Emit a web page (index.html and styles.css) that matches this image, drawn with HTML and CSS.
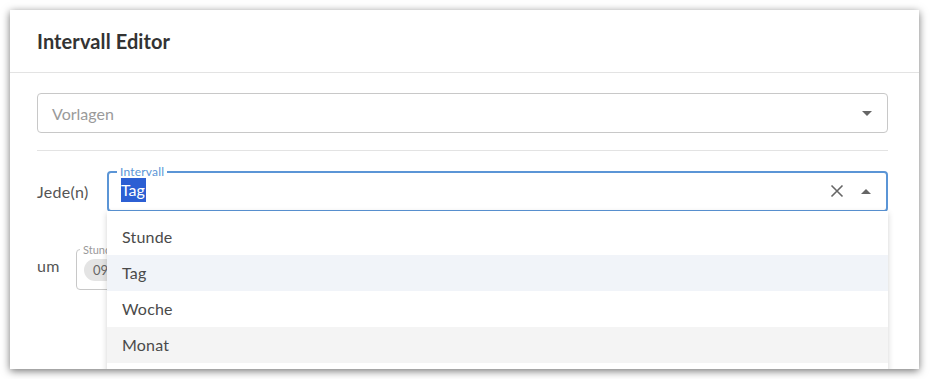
FILE: index.html
```html
<!DOCTYPE html>
<html lang="de">
<head>
<meta charset="utf-8">
<title>Intervall Editor</title>
<link rel="stylesheet" href="styles.css">
</head>
<body>
<div class="dialog">
  <div class="dialog-header">Intervall Editor</div>
  <div class="dialog-body">
    <div class="select">
      <span class="placeholder">Vorlagen</span>
      <span class="caret down"></span>
    </div>
    <div class="divider"></div>
    <div class="row">
      <div class="label">Jede(n)</div>
      <fieldset class="field focused">
        <legend>Intervall</legend>
        <span class="value"><span class="sel">Tag</span></span>
        <svg class="clear" width="14" height="14" viewBox="0 0 14 14"><path d="M1.5 1.5 L12.5 12.5 M12.5 1.5 L1.5 12.5" stroke="#666" stroke-width="1.6" fill="none"/></svg>
        <span class="caret up"></span>
      </fieldset>
    </div>
    <div class="row row-um">
      <div class="label label-um">um</div>
      <fieldset class="field small">
        <legend>Stunde</legend>
        <span class="chip">09</span>
      </fieldset>
      <div class="ghost"></div>
    </div>
    <ul class="menu">
      <li>Stunde</li>
      <li class="hover">Tag</li>
      <li>Woche</li>
      <li class="active">Monat</li>
    </ul>
  </div>
</div>
</body>
</html>
```

FILE: styles.css
```css
html, body {
  margin: 0;
  padding: 0;
  background: #ffffff;
}
body {
  padding: 10px 11px 10px 10px;
  font-family: "Lato", "Noto Sans", sans-serif;
}
.dialog {
  height: 359px;
  background: #fff;
  box-shadow: 0 2px 8px rgba(0, 0, 0, 0.55);
  overflow: hidden;
  position: relative;
}
.dialog-header {
  height: 63px;
  box-sizing: border-box;
  padding: 19px 0 0 27px;
  font-size: 20px;
  font-weight: 700;
  letter-spacing: 0.1px;
  color: #333;
  line-height: 24px;
  border-bottom: 1px solid #e3e3e3;
}
.dialog-body {
  padding: 20px 31px 0 27px;
  position: relative;
}
.select {
  height: 40px;
  box-sizing: border-box;
  border: 1px solid #c8c8c8;
  border-radius: 4px;
  display: flex;
  align-items: center;
  padding: 0 14px;
  justify-content: space-between;
}
.placeholder {
  color: #9a9a9a;
  font-size: 16px;
}
.caret {
  width: 0;
  height: 0;
  border-left: 5px solid transparent;
  border-right: 5px solid transparent;
}
.caret.down {
  border-top: 5px solid #666;
  margin-right: 1px;
}
.caret.up {
  border-bottom: 5px solid #666;
  margin-left: 17px;
  margin-right: 2px;
}
.divider {
  height: 1px;
  background: #e3e3e3;
  margin: 17px 0 14px;
}
.row {
  display: flex;
  align-items: center;
}
.label {
  width: 70px;
  font-size: 16px;
  letter-spacing: 0.3px;
  color: #555;
  padding-top: 6px;
}
.field {
  margin: 0;
  flex: 1;
  height: 47px;
  box-sizing: border-box;
  border: 1px solid #c8c8c8;
  border-radius: 4px;
  padding: 0 14px 0 13px;
  display: flex;
  align-items: center;
}
.field legend {
  font-size: 11px;
  line-height: 13px;
  padding: 0 3px;
  margin-left: -4px;
  color: #999;
}
.field.focused {
  border: 2px solid #5b95d6;
  padding: 0 13px 0 12px;
  margin-left: 0;
}
.field.focused legend {
  color: #5b95d6;
  font-size: 12px;
  letter-spacing: 0.2px;
}
.value {
  flex: 1;
  font-size: 16px;
  margin-top: -9px;
}
.sel {
  background: #2c5fd3;
  color: #fff;
  padding: 2px 1px 3px 0;
}
.clear {
  margin-top: -6px;
}
.field.focused .caret.up {
  margin-top: -6px;
}
.row-um {
  margin-top: 31px;
}
.label-um {
  width: 39px;
  padding-top: 0;
  margin-top: -2px;
}
.field.small {
  flex: 0 0 120px;
  padding: 0 7px;
}
.chip {
  background: #e4e4e4;
  color: #666;
  border-radius: 11px;
  font-size: 13px;
  padding: 3px 9px;
  margin-top: -6px;
}
.ghost {
  flex: 1;
}
.menu {
  position: absolute;
  left: 97px;
  right: 31px;
  top: 138px;
  margin: 0;
  padding: 8px 0 12px;
  list-style: none;
  background: #fff;
  box-shadow: 0 2px 6px rgba(0, 0, 0, 0.18);
}
.menu li {
  height: 36px;
  line-height: 36px;
  padding-left: 15px;
  font-size: 16px;
  letter-spacing: 0.2px;
  color: #4a4a4a;
}
.menu li.hover {
  background: #f1f4f9;
}
.menu li.active {
  background: #f4f4f4;
}
```
